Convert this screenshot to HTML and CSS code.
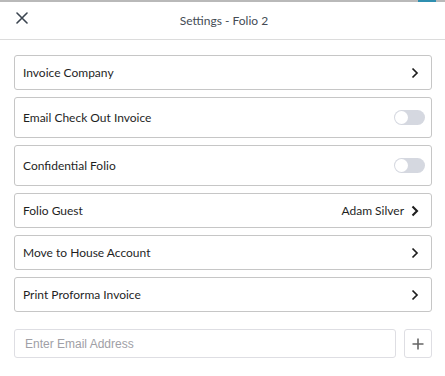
FILE: index.html
```html
<!DOCTYPE html>
<html>
<head>
<meta charset="utf-8">
<link rel="stylesheet" href="styles.css">
</head>
<body>
<div class="topstrip"><span class="topaccent"></span></div>
<div class="modal">
  <header class="header">
    <button class="close" aria-label="Close">
      <svg width="12" height="12" viewBox="0 0 12 12"><path d="M1 1 L11 11 M11 1 L1 11" stroke="#3b4550" stroke-width="1.6" fill="none" stroke-linecap="round"/></svg>
    </button>
    <div class="title">Settings - Folio 2</div>
  </header>
  <div class="content">
    <div class="rows">
      <div class="row"><span class="label">Invoice Company</span><span class="right"><svg class="chev" width="8" height="12" viewBox="0 0 8 12"><path d="M1.5 1.5 L6 6 L1.5 10.5" stroke="#1e1e1e" stroke-width="1.7" fill="none"/></svg></span></div>
      <div class="row tall"><span class="label">Email Check Out Invoice</span><span class="toggle"><span class="knob"></span></span></div>
      <div class="row tall"><span class="label">Confidential Folio</span><span class="toggle"><span class="knob"></span></span></div>
      <div class="row"><span class="label">Folio Guest</span><span class="right"><span class="value">Adam Silver</span><svg class="chev" width="8" height="12" viewBox="0 0 8 12"><path d="M1.5 1.5 L6 6 L1.5 10.5" stroke="#1e1e1e" stroke-width="2.1" fill="none"/></svg></span></div>
      <div class="row"><span class="label">Move to House Account</span><span class="right"><svg class="chev" width="8" height="12" viewBox="0 0 8 12"><path d="M1.5 1.5 L6 6 L1.5 10.5" stroke="#1e1e1e" stroke-width="1.7" fill="none"/></svg></span></div>
      <div class="row"><span class="label">Print Proforma Invoice</span><span class="right"><svg class="chev" width="8" height="12" viewBox="0 0 8 12"><path d="M1.5 1.5 L6 6 L1.5 10.5" stroke="#1e1e1e" stroke-width="1.7" fill="none"/></svg></span></div>
    </div>
    <div class="emailrow">
      <input class="email" type="text" placeholder="Enter Email Address">
      <button class="add" aria-label="Add">
        <svg width="12" height="12" viewBox="0 0 12 12"><path d="M6 0.5 V11.5 M0.5 6 H11.5" stroke="#666" stroke-width="1.6" fill="none"/></svg>
      </button>
    </div>
  </div>
</div>
</body>
</html>
```
FILE: styles.css
```css
* { box-sizing: border-box; }
html, body { margin: 0; padding: 0; background: #fff; }
body { font-family: Lato, "Open Sans", sans-serif; color: #222; width: 445px; height: 376px; overflow: hidden; }

.topstrip { height: 2px; background: #b9b9b9; display: flex; justify-content: flex-end; }
.topaccent { width: 18px; height: 2px; background: #2f8fb0; margin-right: 9px; }

.modal { background: #fff; }
.header {
  height: 38px;
  border-bottom: 1px solid #dcdcdc;
  display: flex;
  align-items: center;
  justify-content: center;
  position: relative;
}
.close {
  position: absolute;
  left: 15px;
  top: 9px;
  width: 14px;
  height: 14px;
  padding: 0;
  border: 0;
  background: none;
  display: flex;
  align-items: center;
  justify-content: center;
}
.title { font-size: 12px; color: #444b55; margin-left: 3px; margin-top: -1px; }

.content { padding: 15px 13px 0 14px; }
.rows { display: flex; flex-direction: column; gap: 7px; }
.row {
  height: 35px;
  border: 1px solid #c6c6c6;
  border-radius: 3px;
  display: flex;
  align-items: center;
  justify-content: space-between;
  padding: 0 12px 0 8px;
  font-size: 12px;
}
.row.tall { height: 41px; padding-right: 6px; }
.label { color: #1f1f1f; }
.right { display: flex; align-items: center; gap: 7px; }
.value { color: #1f1f1f; }
.chev { display: block; }

.toggle {
  width: 31px;
  height: 15px;
  border-radius: 8px;
  background: #d5d8e0;
  position: relative;
  display: block;
}
.knob {
  position: absolute;
  left: 1px;
  top: 1px;
  width: 13px;
  height: 13px;
  border-radius: 50%;
  background: #fff;
}

.emailrow { display: flex; gap: 8px; margin-top: 17px; }
.email {
  flex: 1;
  height: 29px;
  border: 1px solid #dedee3;
  border-radius: 3px;
  padding: 0 10px;
  font-family: "Liberation Sans", Arial, sans-serif;
  font-size: 12px;
  outline: none;
}
.email::placeholder { color: #a0a0a6; }
.add {
  width: 28px;
  height: 29px;
  border: 1px solid #dedee3;
  border-radius: 3px;
  background: #fff;
  padding: 0;
  display: flex;
  align-items: center;
  justify-content: center;
}
```
